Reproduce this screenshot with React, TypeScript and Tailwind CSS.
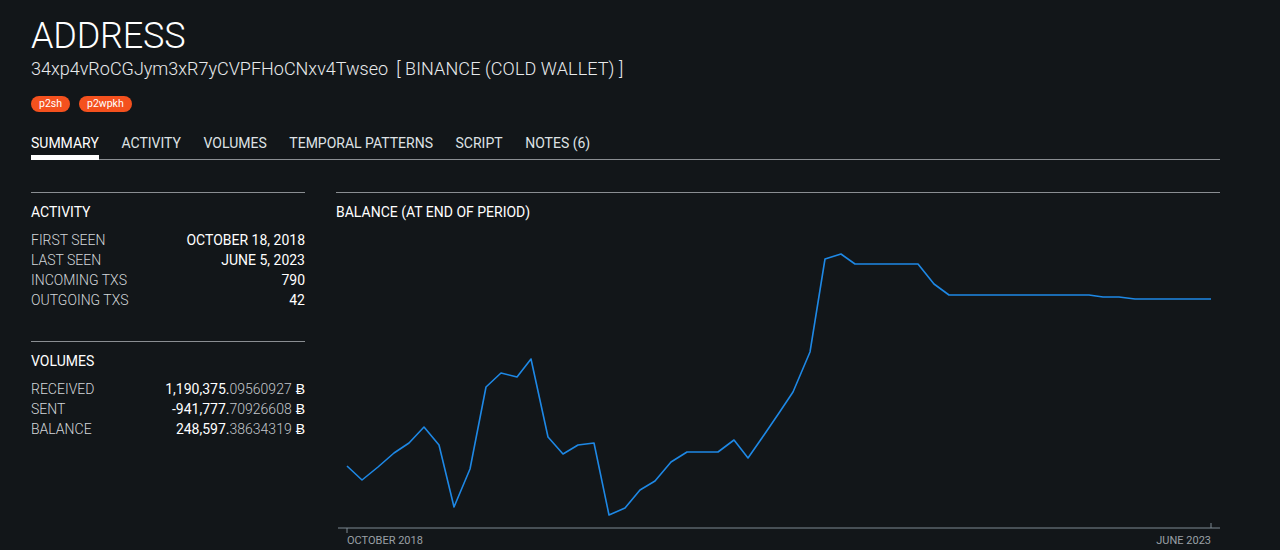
import * as React from "react";

const tabs = ["SUMMARY", "ACTIVITY", "VOLUMES", "TEMPORAL PATTERNS", "SCRIPT", "NOTES (6)"];

const activity = [
  ["FIRST SEEN", "OCTOBER 18, 2018"],
  ["LAST SEEN", "JUNE 5, 2023"],
  ["INCOMING TXS", "790"],
  ["OUTGOING TXS", "42"],
];

const volumes = [
  ["RECEIVED", "1,190,375.", "09560927"],
  ["SENT", "-941,777.", "70926608"],
  ["BALANCE", "248,597.", "38634319"],
];

// balance points, page coords (chart box starts at x 336, y 222)
const pts: [number, number][] = [
  [347, 466], [362, 480], [378, 467], [394, 453], [409, 443], [424, 427], [439, 445],
  [454, 507], [470, 469], [486, 387], [501, 373], [517, 377], [531, 359], [548, 437],
  [563, 454], [578, 445], [594, 443], [609, 515], [625, 508], [640, 490], [655, 481],
  [671, 462], [687, 452], [703, 452], [718, 452], [734, 440], [748, 458], [764, 435],
  [779, 413], [793, 392], [810, 352], [825, 259], [841, 254], [855, 264], [918, 264],
  [934, 284], [949, 295], [1089, 295], [1103, 297], [1119, 297], [1135, 299], [1211, 299],
];

const Section: React.FC<{ title: string; className?: string; children: React.ReactNode }> = ({
  title,
  className,
  children,
}) => (
  <div className={"border-t border-[#8a8e92] pt-[9px] " + (className ?? "")}>
    <div className="text-[14px] leading-5 text-white">{title}</div>
    <div className="mt-2">{children}</div>
  </div>
);

export default function App() {
  const line = pts.map(([x, y]) => `${x - 336},${y - 222}`).join(" ");

  return (
    <div className="h-[550px] overflow-hidden bg-[#121619] font-['Roboto',sans-serif] text-white">
      <div className="pl-[31px] pr-[60px] pt-4">
        <h1 className="text-[36px] leading-[40px] font-light tracking-[-0.2px]">ADDRESS</h1>
        <div className="mt-px text-[18px] leading-6 font-light text-[#e8eaec]">
          34xp4vRoCGJym3xR7yCVPFHoCNxv4Twseo
          <span className="ml-[8px] tracking-[0.1px]">[ BINANCE (COLD WALLET) ]</span>
        </div>

        <div className="mt-[15px] flex gap-[9px]">
          {["p2sh", "p2wpkh"].map((b) => (
            <span
              key={b}
              className="h-4 rounded-full bg-[#f4511e] px-[8px] text-[10.5px] leading-4 text-white"
            >
              {b}
            </span>
          ))}
        </div>

        <div className="mt-[21px] flex w-[1189px] gap-[22.6px] border-b border-[#8a8e92]">
          {tabs.map((t, i) => (
            <div
              key={t}
              className={
                "-mb-px border-b-[5px] pb-[2px] text-[14px] leading-5 " +
                (i === 0 ? "border-white text-white" : "border-transparent text-[#dfe2e5]")
              }
            >
              {t}
            </div>
          ))}
        </div>

        <div className="mt-8 flex gap-[31px]">
          <div className="w-[274px]">
            <Section title="ACTIVITY">
              {activity.map(([k, v]) => (
                <div key={k} className="flex justify-between text-[14px] leading-5">
                  <span className="font-light text-[#d3d6d9]">{k}</span>
                  <span className="text-white">{v}</span>
                </div>
              ))}
            </Section>
            <Section title="VOLUMES" className="mt-[31px]">
              {volumes.map(([k, a, b]) => (
                <div key={k} className="flex justify-between text-[14px] leading-5">
                  <span className="font-light text-[#d3d6d9]">{k}</span>
                  <span className="text-white">
                    <span>{a}</span>
                    <span className="font-light text-[#c3c7cb]">{b}</span>
                    <span className="ml-1">Ƀ</span>
                  </span>
                </div>
              ))}
            </Section>
          </div>

          <div className="w-[884px] border-t border-[#8a8e92] pt-[9px]">
            <div className="text-[14px] leading-5 text-white">BALANCE (AT END OF PERIOD)</div>
            <svg width="884" height="312" className="block">
              <polyline
                points={line}
                fill="none"
                stroke="#1e88e5"
                strokeWidth="1.6"
                strokeLinejoin="round"
              />
              <line x1="2" y1="306" x2="884" y2="306" stroke="#7d8993" strokeWidth="1" />
              <line x1="11" y1="306" x2="11" y2="311" stroke="#7d8993" strokeWidth="1" />
              <line x1="875" y1="301" x2="875" y2="306" stroke="#7d8993" strokeWidth="1" />
            </svg>
            <div className="flex justify-between pl-[11px] pr-[9px] text-[11px] leading-[14px] text-[#9aa0a6]">
              <span>OCTOBER 2018</span>
              <span>JUNE 2023</span>
            </div>
          </div>
        </div>
      </div>
    </div>
  );
}
